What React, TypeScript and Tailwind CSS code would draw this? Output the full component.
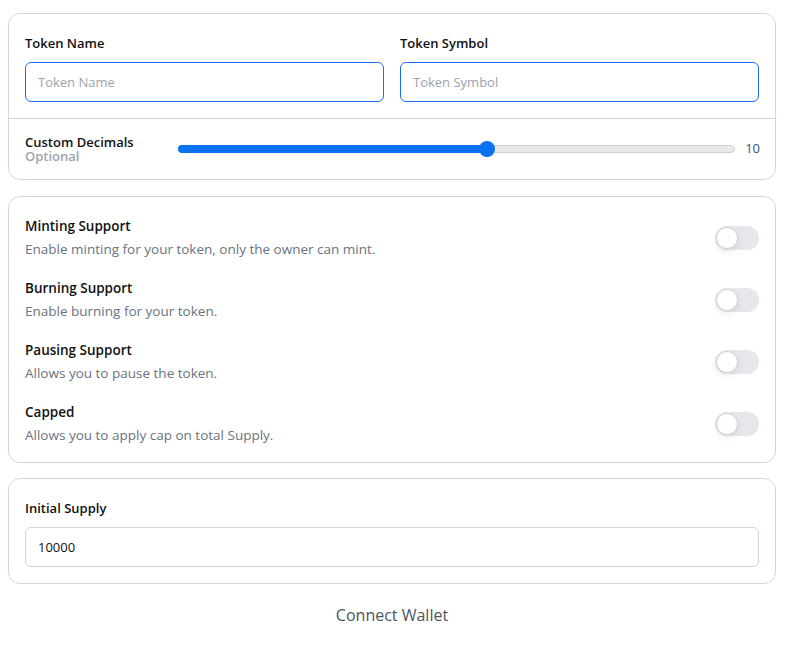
import { useState } from "react";

const FEATURES = [
  { title: "Minting Support", desc: "Enable minting for your token, only the owner can mint." },
  { title: "Burning Support", desc: "Enable burning for your token." },
  { title: "Pausing Support", desc: "Allows you to pause the token." },
  { title: "Capped", desc: "Allows you to apply cap on total Supply." },
];

function Toggle() {
  return (
    <button type="button" className="relative w-[44px] h-[24px] rounded-full bg-[#e5e7eb] shrink-0">
      <span className="absolute left-[1px] top-[1px] w-[22px] h-[22px] rounded-full bg-white border border-[#d1d5db] shadow-[0_3px_6px_rgba(0,0,0,0.08)]" />
    </button>
  );
}

function Slider({ value, max }: { value: number; max: number }) {
  const pct = (value / max) * 100;
  return (
    <div className="relative flex-1 h-[8px] rounded-full bg-[#e9e9ea] border border-[#cfcfd1]">
      <div className="absolute -left-px -top-px h-[8px] rounded-full bg-[#0b72f4]" style={{ width: `${pct}%` }} />
      <div className="absolute top-1/2 -translate-y-1/2 -translate-x-1/2 w-[16px] h-[16px] rounded-full bg-[#0b72f4]" style={{ left: `${pct}%` }} />
    </div>
  );
}

export default function App() {
  const [decimals] = useState(10);
  return (
    <div className="min-h-screen bg-white pl-2 pr-[9px] pt-[13px] text-[13px] text-[#111] font-['Segoe_UI','Open_Sans',sans-serif]">
      <div className="rounded-xl border border-[#cfd5e3]">
        <div className="grid grid-cols-2 gap-4 px-4 pt-[20px] pb-4">
          <label className="flex flex-col gap-[10px]">
            <span className="font-semibold leading-[18px]">Token Name</span>
            <input placeholder="Token Name" className="h-10 rounded-md border border-[#1b6ef3] px-3 placeholder:text-[#9ca3af] outline-none" />
          </label>
          <label className="flex flex-col gap-[10px]">
            <span className="font-semibold leading-[18px]">Token Symbol</span>
            <input placeholder="Token Symbol" className="h-10 rounded-md border border-[#1b6ef3] px-3 placeholder:text-[#9ca3af] outline-none" />
          </label>
        </div>
        <div className="border-t border-[#cfd5e3] flex items-center gap-[9px] pl-4 pr-[15px] pt-[16px] pb-[16px]">
          <div className="w-[144px] shrink-0 flex flex-col leading-[14px]">
            <span className="font-semibold">Custom Decimals</span>
            <span className="font-semibold text-[#9ca3af]">Optional</span>
          </div>
          <Slider value={decimals} max={18} />
          <span className="w-[16px] text-[#375282] text-right">{decimals}</span>
        </div>
      </div>

      <div className="mt-4 rounded-xl border border-[#cfd5e3] px-4 pt-[20px] pb-[18px] flex flex-col gap-[21px] text-[13.5px]">
        {FEATURES.map((f) => (
          <div key={f.title} className="flex items-center justify-between">
            <div className="flex flex-col gap-[5px]">
              <span className="font-semibold leading-[18px]">{f.title}</span>
              <span className="text-[#6b7280] leading-[18px]">{f.desc}</span>
            </div>
            <Toggle />
          </div>
        ))}
      </div>

      <div className="mt-[15px] rounded-xl border border-[#cfd5e3] px-4 pt-[20px] pb-4 flex flex-col gap-[10px]">
        <span className="font-semibold leading-[18px]">Initial Supply</span>
        <input defaultValue="10000" className="h-10 rounded-md border border-[#cfd5e3] px-3 outline-none" />
      </div>

      <div className="flex justify-center pt-[19px]">
        <button type="button" className="text-[16px] text-[#4b5563]">Connect Wallet</button>
      </div>
    </div>
  );
}
